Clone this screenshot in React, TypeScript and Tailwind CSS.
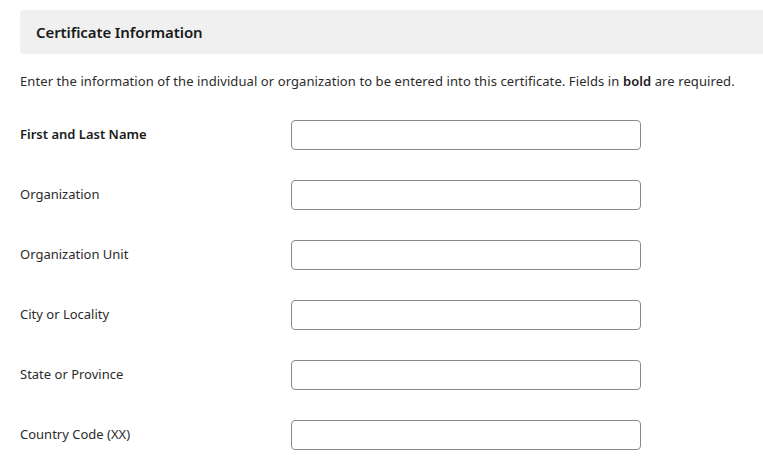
const fields = [
  { label: 'First and Last Name', required: true },
  { label: 'Organization' },
  { label: 'Organization Unit' },
  { label: 'City or Locality' },
  { label: 'State or Province' },
  { label: 'Country Code (XX)' },
]

export default function App() {
  return (
    <div
      className="w-full overflow-hidden bg-white text-[#1f1f1f]"
      style={{ fontFamily: '"Segoe UI", "Noto Sans", sans-serif' }}
    >
      <div className="pl-5 pt-[10px]">
        <div className="-mr-4 flex h-[44px] items-center rounded bg-[#f0f0f0] pl-4">
          <h2 className="text-[15px] font-semibold tracking-[-0.1px] text-[#1a1a1a]">Certificate Information</h2>
        </div>
        <p className="mt-[17px] text-[13px] leading-[20px] tracking-[0.09px] text-[#2b2b2b]">
          Enter the information of the individual or organization to be entered into this
          certificate. Fields in <b className="font-semibold text-[#1a1a1a]">bold</b> are required.
        </p>
        <div className="mt-[29px] flex flex-col gap-[30px]">
          {fields.map(f => (
            <div key={f.label} className="flex items-center">
              <label
                className={`w-[271px] text-[13px] ${f.required ? 'font-semibold text-[#1a1a1a]' : 'text-[#2b2b2b]'}`}
              >
                {f.label}
              </label>
              <input
                type="text"
                className="h-[30px] w-[350px] rounded border border-[#8a8a8a] bg-white px-2 text-[13px] outline-none"
              />
            </div>
          ))}
        </div>
      </div>
    </div>
  )
}
